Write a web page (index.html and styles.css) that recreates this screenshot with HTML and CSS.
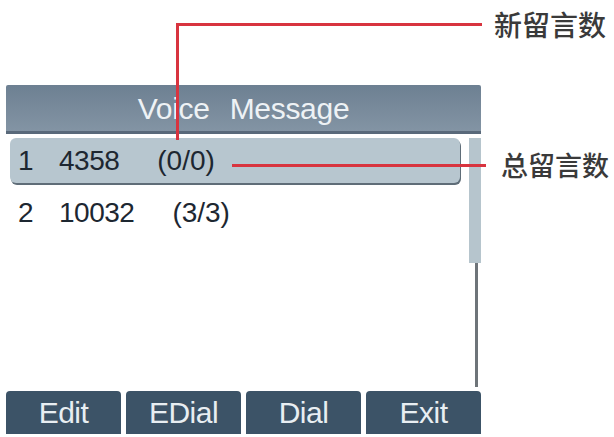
FILE: index.html
```html
<!DOCTYPE html>
<html lang="zh">
<head>
<meta charset="utf-8">
<title>Voice Message</title>
<link rel="stylesheet" href="styles.css">
</head>
<body>
<div class="page">
  <div class="phone">
    <div class="title">Voice Message</div>
    <div class="content">
      <div class="list">
        <div class="row selected">
          <span class="idx">1</span><span class="num">4358</span><span class="count">(0/0)</span>
        </div>
        <div class="row">
          <span class="idx">2</span><span class="num">10032</span><span class="count">(3/3)</span>
        </div>
      </div>
      <div class="scroll">
        <div class="thumb"></div>
        <div class="track"></div>
      </div>
    </div>
    <div class="softkeys">
      <div class="key">Edit</div>
      <div class="key">EDial</div>
      <div class="key">Dial</div>
      <div class="key">Exit</div>
    </div>
  </div>

  <div class="callout-new-v"></div>
  <div class="callout-new-h"></div>
  <div class="label label-new">新留言数</div>
  <div class="callout-total-h"></div>
  <div class="label label-total">总留言数</div>
</div>
</body>
</html>
```
FILE: styles.css
```css
html, body {
  margin: 0;
  padding: 0;
  background: #ffffff;
}

.page {
  position: relative;
  width: 614px;
  height: 437px;
  overflow: hidden;
  font-family: "Liberation Sans", Arial, sans-serif;
}

.phone {
  margin-top: 85px;
  margin-left: 6px;
  width: 475px;
  display: flex;
  flex-direction: column;
}

.title {
  height: 46px;
  background: linear-gradient(#6d8092, #8394a4);
  border-bottom: 3px solid #59697a;
  border-radius: 2px 2px 0 0;
  color: #eef2f5;
  font-size: 30px;
  line-height: 48px;
  text-align: center;
  word-spacing: 12px;
  letter-spacing: -0.3px;
}

.content {
  height: 257px;
  display: flex;
}

.list {
  flex: 1;
  padding: 4px 9px 0 4px;
  display: flex;
  flex-direction: column;
  gap: 7px;
}

.row {
  height: 45px;
  display: flex;
  align-items: center;
  padding-left: 8px;
  font-size: 28px;
  color: #1d2731;
}

.row.selected {
  background: #b7c6cf;
  border-radius: 6px;
  box-shadow: 1px 2px 0 #5f6d78;
}

.idx {
  width: 41px;
}

.num {
  letter-spacing: -0.5px;
}

.count {
  margin-left: 38px;
}

.scroll {
  width: 12px;
  padding: 4px 0;
  display: flex;
  flex-direction: column;
  align-items: flex-end;
}

.thumb {
  width: 12px;
  height: 125px;
  background: #b6c5cd;
}

.track {
  flex: 1;
  width: 3px;
  margin-right: 3px;
  background: #6e7479;
}

.softkeys {
  height: 43px;
  display: grid;
  grid-template-columns: repeat(4, 1fr);
  gap: 5px;
}

.key {
  background: #3c5367;
  border-radius: 4px 4px 0 0;
  color: #e8eef2;
  font-size: 30px;
  line-height: 43px;
  text-align: center;
  letter-spacing: -0.5px;
}

.callout-new-v {
  position: absolute;
  left: 176px;
  top: 23px;
  width: 3px;
  height: 117px;
  background: #d8343f;
}

.callout-new-h {
  position: absolute;
  left: 176px;
  top: 23px;
  width: 306px;
  height: 3px;
  background: #d8343f;
}

.callout-total-h {
  position: absolute;
  left: 232px;
  top: 164px;
  width: 254px;
  height: 3px;
  background: #d8343f;
}

.label {
  position: absolute;
  font-family: "Noto Sans CJK SC", "Noto Sans", sans-serif;
  font-weight: 500;
  color: #3a3a3a;
  line-height: 1;
  white-space: nowrap;
}

.label-new {
  left: 494px;
  top: 10px;
  font-size: 28px;
}

.label-total {
  left: 501px;
  top: 151px;
  font-size: 27px;
}
```
